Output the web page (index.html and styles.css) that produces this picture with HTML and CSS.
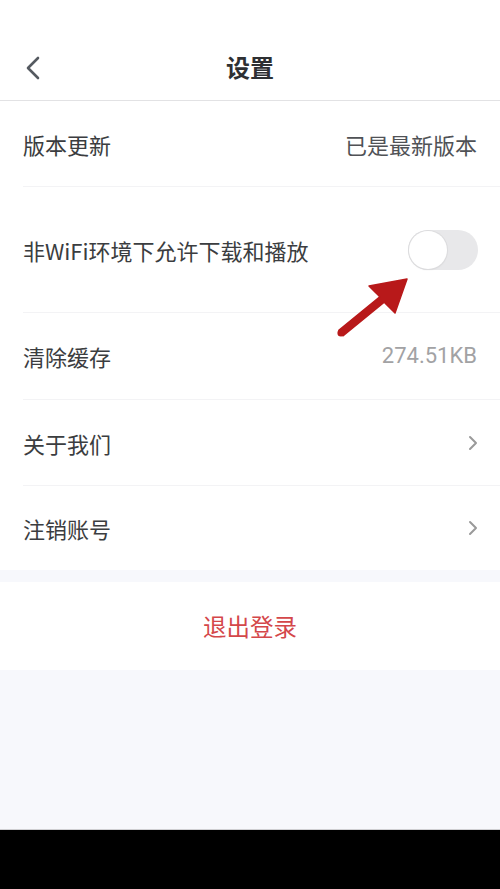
FILE: index.html
```html
<!DOCTYPE html>
<html lang="zh-CN">
<head>
<meta charset="utf-8">
<title>设置</title>
<link rel="stylesheet" href="styles.css">
</head>
<body>
<div class="screen">
  <header class="navbar">
    <span class="back">
      <svg width="16" height="24" viewBox="0 0 16 24"><path d="M13 2 L3 12 L13 22" fill="none" stroke="#555a60" stroke-width="2.6" stroke-linecap="round" stroke-linejoin="round"/></svg>
    </span>
    <h1 class="title">设置</h1>
  </header>

  <section class="list">
    <div class="row row-1">
      <span class="label">版本更新</span>
      <span class="value">已是最新版本</span>
    </div>
    <div class="row row-2">
      <span class="label">非WiFi环境下允许下载和播放</span>
      <span class="switch"><span class="knob"></span></span>
    </div>
    <div class="row row-3">
      <span class="label">清除缓存</span>
      <span class="value muted">274.51KB</span>
    </div>
    <div class="row row-4">
      <span class="label">关于我们</span>
      <svg class="chev" width="10" height="16" viewBox="0 0 10 16"><path d="M2 2 L8 8 L2 14" fill="none" stroke="#9a9a9a" stroke-width="2" stroke-linecap="round" stroke-linejoin="round"/></svg>
    </div>
    <div class="row row-5">
      <span class="label">注销账号</span>
      <svg class="chev" width="10" height="16" viewBox="0 0 10 16"><path d="M2 2 L8 8 L2 14" fill="none" stroke="#9a9a9a" stroke-width="2" stroke-linecap="round" stroke-linejoin="round"/></svg>
    </div>
  </section>

  <button class="logout">退出登录</button>

  <div class="fill"></div>
  <div class="sysbar"></div>

  <svg class="pointer" width="500" height="889" viewBox="0 0 500 889">
    <polygon points="338.8,330.3 379.8,296.8 369,286 407,279 395,313 384.2,302.2 343.2,335.7" fill="#b8191a" stroke="#b8191a" stroke-width="1.5" stroke-linejoin="round"/>
    <circle cx="341" cy="333" r="3.6" fill="#b8191a"/>
  </svg>
</div>
</body>
</html>
```

FILE: styles.css
```css
* { box-sizing: border-box; }

html, body {
  margin: 0;
  padding: 0;
}

body {
  width: 500px;
  height: 889px;
  overflow: hidden;
  background: #f7f8fc;
  font-family: "Noto Sans CJK SC", "Noto Sans", sans-serif;
}

.screen {
  position: relative;
  width: 500px;
  height: 889px;
  display: flex;
  flex-direction: column;
}

.navbar {
  height: 101px;
  padding-top: 34px;
  background: #fff;
  border-bottom: 1px solid #e2e2e4;
  display: flex;
  align-items: center;
  justify-content: center;
  position: relative;
}

.back {
  position: absolute;
  left: 25px;
  top: 56px;
  width: 16px;
  height: 24px;
  display: flex;
}

.title {
  margin: 0;
  font-size: 24px;
  font-weight: 700;
  color: #2e3033;
  line-height: 1;
}

.list {
  background: #fff;
  padding-left: 23px;
}

.row {
  display: flex;
  align-items: center;
  justify-content: space-between;
  padding-right: 23px;
  border-bottom: 1px solid #f3f3f5;
}

.row-1 { height: 86px; }
.row-2 { height: 126px; }
.row-3 { height: 87px; }
.row-4 { height: 86px; }
.row-5 { height: 84px; border-bottom: none; }

.label {
  font-size: 22px;
  color: #3b3d40;
  line-height: 1;
}

.value {
  font-size: 22px;
  color: #505256;
  line-height: 1;
}

.value.muted {
  color: #a2a2a4;
  font-family: "Roboto", "Noto Sans", sans-serif;
  font-size: 22px;
}

.chev {
  margin-right: -1px;
}

.switch {
  width: 70px;
  height: 40px;
  border-radius: 20px;
  background: #e8e8ea;
  display: flex;
  align-items: center;
  padding-left: 1px;
  margin-right: -1px;
}

.knob {
  width: 38px;
  height: 38px;
  border-radius: 50%;
  background: #fff;
  box-shadow: 0 0 0 1px #dcdcde, 0 1px 2px rgba(0, 0, 0, 0.08);
}

.logout {
  margin-top: 12px;
  height: 88px;
  border: none;
  background: #fff;
  color: #d4474a;
  font-family: "Noto Sans CJK SC", "Noto Sans", sans-serif;
  font-size: 23.5px;
  width: 100%;
  padding: 0;
}

.fill {
  flex: 1;
  background: #f7f8fc;
  border-bottom: 1px solid #cfcfd2;
}

.sysbar {
  height: 59px;
  background: #000;
}

.pointer {
  position: absolute;
  left: 0;
  top: 0;
  pointer-events: none;
}
```
